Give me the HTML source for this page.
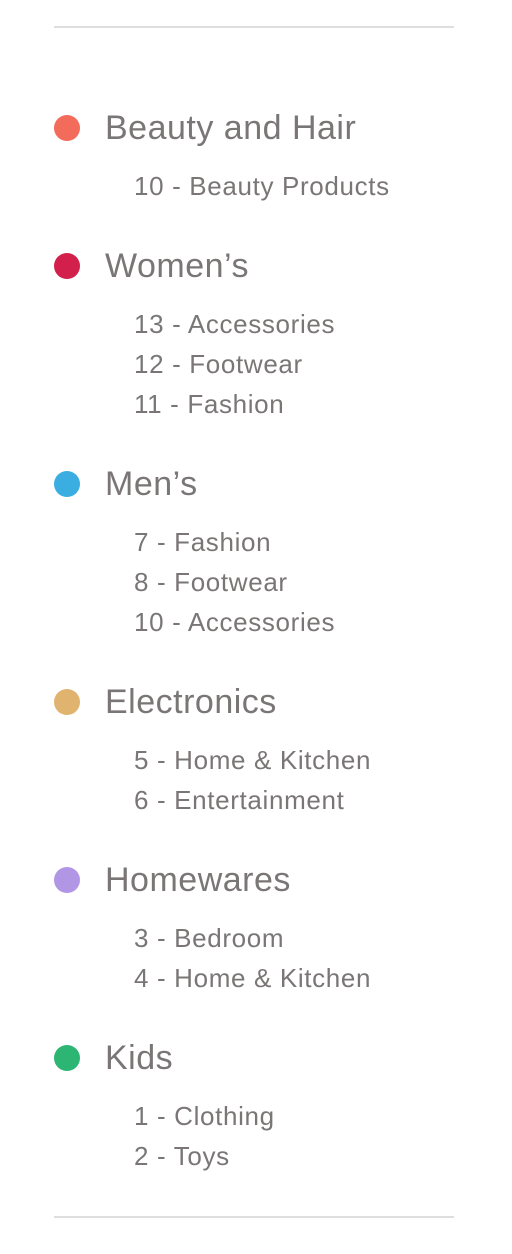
<!DOCTYPE html>
<html><head><meta charset="utf-8"><style>
html,body{margin:0;padding:0;background:#fff;width:512px;height:1254px;overflow:hidden;position:relative;font-family:"Liberation Sans",sans-serif;color:#7a7676}
.hr{position:absolute;left:54px;width:400px;height:2px;background:#dedede}
.d{position:absolute;left:54px;width:26px;height:26px;border-radius:50%}
.h{position:absolute;left:105px;font-size:34px;line-height:40px;white-space:nowrap;letter-spacing:0.5px}
.s{position:absolute;left:134px;font-size:26px;line-height:30px;white-space:nowrap;letter-spacing:0.65px}
</style></head><body>
<div class="hr" style="top:26px"></div>
<div class="hr" style="top:1216px"></div>

<div class="d" style="top:115px;background:#f26b5b"></div>
<div class="h" style="top:108px">Beauty and Hair</div>
<div class="s" style="top:171px">10 - Beauty Products</div>

<div class="d" style="top:253px;background:#d21f4b"></div>
<div class="h" style="top:246px">Women’s</div>
<div class="s" style="top:309px">13 - Accessories</div>
<div class="s" style="top:349px">12 - Footwear</div>
<div class="s" style="top:389px">11 - Fashion</div>

<div class="d" style="top:471px;background:#3aaee0"></div>
<div class="h" style="top:464px">Men’s</div>
<div class="s" style="top:527px">7 - Fashion</div>
<div class="s" style="top:567px">8 - Footwear</div>
<div class="s" style="top:607px">10 - Accessories</div>

<div class="d" style="top:689px;background:#e0b46f"></div>
<div class="h" style="top:682px">Electronics</div>
<div class="s" style="top:745px">5 - Home &amp; Kitchen</div>
<div class="s" style="top:785px">6 - Entertainment</div>

<div class="d" style="top:867px;background:#b296e6"></div>
<div class="h" style="top:860px">Homewares</div>
<div class="s" style="top:923px">3 - Bedroom</div>
<div class="s" style="top:963px">4 - Home &amp; Kitchen</div>

<div class="d" style="top:1045px;background:#2db574"></div>
<div class="h" style="top:1038px">Kids</div>
<div class="s" style="top:1101px">1 - Clothing</div>
<div class="s" style="top:1141px">2 - Toys</div>
</body></html>
